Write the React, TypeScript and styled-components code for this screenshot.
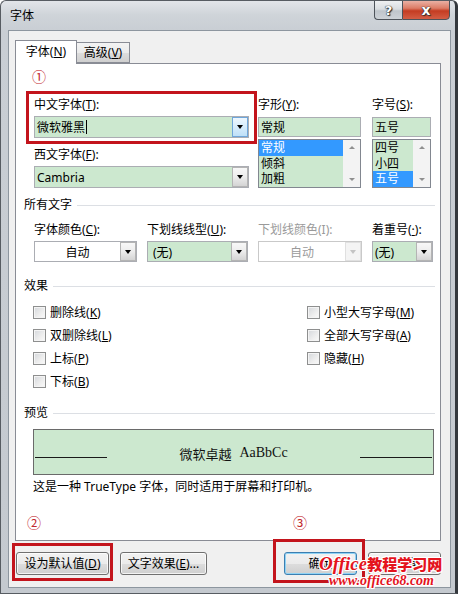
import React from "react";
import styled, { createGlobalStyle } from "styled-components";

const FONT = `"Noto Sans", "Noto Sans CJK SC", sans-serif`;

const Global = createGlobalStyle`
  html, body { margin: 0; padding: 0; background: #ffffff; }
  body { font-family: ${FONT}; font-size: 12px; color: #000; }
  * { box-sizing: border-box; }
`;

const Window = styled.div`
  position: relative;
  width: 458px;
  height: 594px;
  border: 1px solid #575c62;
  border-right: 3px solid #34383d;
  border-radius: 6px 6px 0 0;
  background: linear-gradient(180deg, #e2e5e9 0px, #cfd4d9 14px, #c9ced4 30px, #c4c9cf 100%);
  display: flex;
  flex-direction: column;
  overflow: hidden;
`;

const TitleBar = styled.div`
  height: 29px;
  display: flex;
  align-items: flex-start;
  padding: 0 5px 0 9px;
`;

const Title = styled.div`
  margin-top: 7px;
  line-height: 16px;
  font-size: 12px;
  color: #000;
`;

const Caption = styled.div`
  margin-left: auto;
  display: flex;
  margin-top: -1px;
`;

const CaptionBtn = styled.div`
  height: 20px;
  display: flex;
  align-items: center;
  justify-content: center;
  border: 1px solid #4d535a;
  color: #fff;
  font-weight: bold;
  font-family: "DejaVu Sans", sans-serif;
  text-shadow: 0 0 1px #222, 0 0 1px #222, 1px 1px 1px #333;
`;

const HelpBtn = styled(CaptionBtn)`
  width: 28px;
  border-right: none;
  border-radius: 0 0 0 4px;
  background: linear-gradient(180deg, #eef0f2 0%, #d9dde1 45%, #bfc5cb 55%, #cdd2d7 100%);
  font-size: 13px;
`;

const CloseBtn = styled(CaptionBtn)`
  width: 48px;
  border-radius: 0 0 4px 0;
  background: linear-gradient(180deg, #eab0a3 0%, #dc7c66 40%, #c43c22 55%, #d35d44 100%);
  font-size: 14px;
`;

const Client = styled.div`
  margin-left: 7px;
  width: 443px;
  height: 558px;
  border: 1px solid #8d969f;
  background: #f0f0f0;
  padding: 9px 0 0 6px;
  display: flex;
  flex-direction: column;
`;

const Tabs = styled.div`
  display: flex;
  align-items: flex-end;
  height: 23px;
  position: relative;
  z-index: 1;
`;

const Tab = styled.div<{ $active?: boolean }>`
  height: ${(p) => (p.$active ? 24 : 21)}px;
  width: ${(p) => (p.$active ? 62 : 53)}px;
  margin-bottom: ${(p) => (p.$active ? -1 : 0)}px;
  border: 1px solid #898c95;
  border-bottom: ${(p) => (p.$active ? "none" : "1px solid #898c95")};
  border-left: ${(p) => (p.$active ? "1px solid #898c95" : "none")};
  background: ${(p) => (p.$active ? "#ffffff" : "linear-gradient(180deg, #f3f3f3 0%, #ebebeb 50%, #dddddd 51%, #cfcfcf 100%)")};
  display: flex;
  align-items: center;
  justify-content: center;
  padding-bottom: ${(p) => (p.$active ? 2 : 0)}px;
  line-height: 16px;
`;

const U = styled.span`
  text-decoration: underline;
`;

const Panel = styled.div`
  width: 426px;
  height: 478px;
  border: 1px solid #898c95;
  background: #ffffff;
  padding: 33px 5px 0 8px;
  display: flex;
  flex-direction: column;
`;

const TopGrid = styled.div`
  margin-left: 10px;
  display: grid;
  grid-template-columns: 215px 103px 61px;
  column-gap: 9px;
  & > :nth-child(3) { margin-left: 2px; }
`;

const Column = styled.div`
  display: flex;
  flex-direction: column;
`;

const Label = styled.div<{ $mt?: number; $disabled?: boolean }>`
  height: 16px;
  line-height: 16px;
  margin-top: ${(p) => p.$mt ?? 0}px;
  color: ${(p) => (p.$disabled ? "#9a9a9a" : "#000")};
  white-space: nowrap;
`;

const Combo = styled.div<{ $h: number; $mt?: number; $green?: boolean; $disabled?: boolean }>`
  height: ${(p) => p.$h}px;
  margin-top: ${(p) => p.$mt ?? 0}px;
  border: 1px solid ${(p) => (p.$disabled ? "#c9c9c9" : "#abadb3")};
  background: ${(p) => (p.$green ? "#cce8cf" : "#ffffff")};
  display: flex;
  align-items: stretch;
`;

const ComboText = styled.div<{ $center?: boolean; $disabled?: boolean; $pad?: number }>`
  flex: 1;
  display: flex;
  align-items: center;
  justify-content: ${(p) => (p.$center ? "center" : "flex-start")};
  padding-left: ${(p) => (p.$center ? 0 : p.$pad ?? 2)}px;
  color: ${(p) => (p.$disabled ? "#9a9a9a" : "#000")};
  font-size: 12px;
  white-space: nowrap;
`;

const Caret = styled.span`
  display: inline-block;
  width: 1px;
  height: 14px;
  background: #000;
  margin-left: 1px;
`;

const DropBtn = styled.div<{ $hot?: boolean; $disabled?: boolean }>`
  width: 16px;
  border: 1px solid ${(p) => (p.$hot ? "#6fa6da" : p.$disabled ? "#e0e0e0" : "#b4b4b4")};
  background: ${(p) =>
    p.$hot
      ? "linear-gradient(180deg, #eef7fe 0%, #d6ecfc 50%, #bfe0f8 100%)"
      : p.$disabled
      ? "#f4f4f4"
      : "linear-gradient(180deg, #f8f8f8 0%, #ececec 50%, #d4d4d4 100%)"};
  display: flex;
  align-items: center;
  justify-content: center;
`;

const Arrow = styled.span<{ $disabled?: boolean }>`
  width: 0;
  height: 0;
  border-left: 3.5px solid transparent;
  border-right: 3.5px solid transparent;
  border-top: 4px solid ${(p) => (p.$disabled ? "#c4c4c4" : "#000")};
`;

const TextBox = styled.div`
  margin-top: 4px;
  height: 20px;
  border: 1px solid #abadb3;
  background: #cce8cf;
  padding-left: 2px;
  display: flex;
  align-items: center;
`;

const ListBox = styled.div`
  margin-top: 2px;
  height: 49px;
  border: 1px solid #828790;
  background: #cce8cf;
  display: flex;
  overflow: hidden;
`;

const Items = styled.div`
  flex: 1;
  display: flex;
  flex-direction: column;
`;

const Item = styled.div<{ $selected?: boolean }>`
  height: 15.7px;
  line-height: 15.7px;
  padding-left: 2px;
  font-size: 12px;
  background: ${(p) => (p.$selected ? "#3399ff" : "transparent")};
  color: ${(p) => (p.$selected ? "#ffffff" : "#000")};
`;

const ScrollBar = styled.div`
  width: 17px;
  background: #f3f3f3;
  display: flex;
  flex-direction: column;
  justify-content: space-between;
  align-items: center;
  padding: 6px 0 6px;
`;

const ScrollArrow = styled.span<{ $up?: boolean }>`
  width: 0;
  height: 0;
  border-left: 3px solid transparent;
  border-right: 3px solid transparent;
  border-top: ${(p) => (p.$up ? "none" : "3px solid #8f8f8f")};
  border-bottom: ${(p) => (p.$up ? "3px solid #8f8f8f" : "none")};
`;

const Heading = styled.div<{ $mt: number }>`
  margin-top: ${(p) => p.$mt}px;
  height: 16px;
  display: flex;
  align-items: center;
  line-height: 16px;
  &::after {
    content: "";
    flex: 1;
    height: 1px;
    background: #dcdfe4;
    margin-left: 5px;
  }
`;

const DropRow = styled.div`
  margin-top: 9px;
  margin-left: 10px;
  display: grid;
  grid-template-columns: 103px 101px 104px 61px;
  column-gap: 10px;
`;

const DropCell = styled.div`
  display: flex;
  flex-direction: column;
  & > ${Combo} { margin-top: 3px; }
`;

const CheckGrid = styled.div`
  margin-top: 7px;
  margin-left: 9px;
  display: grid;
  grid-template-columns: 274px auto;
  grid-template-rows: repeat(4, 23px);
  grid-auto-flow: column;
`;

const CheckItem = styled.label`
  display: flex;
  align-items: center;
  gap: 4px;
  line-height: 16px;
  white-space: nowrap;
`;

const CheckText = styled.span`
  white-space: nowrap;
`;

const Box = styled.span`
  width: 13px;
  height: 13px;
  border: 1px solid #8e8f8f;
  background: linear-gradient(135deg, #d4d7db 0%, #eeeeee 60%, #fafafa 100%);
  box-shadow: inset 0 0 0 1px #f4f4f4;
`;

const Preview = styled.div`
  margin-top: 8px;
  margin-left: 9px;
  width: 401px;
  height: 46px;
  border: 1px solid #6a6a6a;
  background: #cce8cf;
  display: flex;
  padding: 0 1px;
`;

const PreviewLine = styled.div`
  width: 72px;
  align-self: flex-end;
  margin-bottom: 16px;
  border-bottom: 1px solid #1a1a1a;
`;

const PreviewText = styled.div`
  flex: 1;
  display: flex;
  align-items: center;
  justify-content: center;
  font-size: 13px;
  padding-top: 2px;
  color: #111;
`;

const Serif = styled.span`
  font-family: "Liberation Serif", "DejaVu Serif", serif;
  font-size: 14px;
  margin-left: 8px;
`;

const Desc = styled.div`
  margin-top: 4px;
  margin-left: 9px;
  height: 16px;
  line-height: 16px;
`;

const ButtonRow = styled.div`
  margin-top: 11px;
  width: 426px;
  padding-left: 1px;
  display: flex;
  justify-content: space-between;
`;

const Group = styled.div`
  display: flex;
  gap: 11px;
`;

const Button = styled.div<{ $w: number; $primary?: boolean }>`
  width: ${(p) => p.$w}px;
  height: 23px;
  border: 1px solid ${(p) => (p.$primary ? "#3c7fb1" : "#707070")};
  border-radius: 3px;
  background: linear-gradient(180deg, #f2f2f2 0%, #ebebeb 50%, #dddddd 51%, #cfcfcf 100%);
  box-shadow: inset 0 0 0 1px ${(p) => (p.$primary ? "#8fd3f5" : "rgba(255,255,255,0.75)")};
  display: flex;
  align-items: center;
  justify-content: center;
  white-space: nowrap;
  line-height: 16px;
`;

/* ---------- annotation overlays ---------- */

const Mark = styled.div<{ $x: number; $y: number }>`
  position: absolute;
  left: ${(p) => p.$x}px;
  top: ${(p) => p.$y}px;
  color: #c1272d;
  font-family: "Noto Sans CJK SC", sans-serif;
  font-size: 14px;
  line-height: 14px;
`;

const RedBox = styled.div<{ $x: number; $y: number; $w: number; $h: number }>`
  position: absolute;
  left: ${(p) => p.$x}px;
  top: ${(p) => p.$y}px;
  width: ${(p) => p.$w}px;
  height: ${(p) => p.$h}px;
  border: 3px solid #c3141c;
  pointer-events: none;
`;

const Watermark = styled.div`
  position: absolute;
  left: 318px;
  top: 553px;
  color: #e4141d;
  line-height: 1;
  pointer-events: none;
  text-shadow: 1px 0 0 #fff, -1px 0 0 #fff, 0 1px 0 #fff, 0 -1px 0 #fff, 1px 1px 0 #fff, -1px -1px 0 #fff, 1px -1px 0 #fff, -1px 1px 0 #fff;
`;

const WmTop = styled.div`
  display: flex;
  align-items: baseline;
  white-space: nowrap;
`;

const WmOffice = styled.span`
  font-family: "Liberation Serif", serif;
  font-style: italic;
  font-weight: bold;
  font-size: 19px;
`;

const WmCn = styled.span`
  font-family: "Noto Sans CJK SC", sans-serif;
  font-weight: 900;
  font-size: 15px;
`;

const WmUrl = styled.div`
  margin-left: 10px;
  margin-top: 1px;
  font-family: "Liberation Serif", serif;
  font-style: italic;
  font-weight: bold;
  font-size: 14px;
  white-space: nowrap;
`;

const checks: [string, string][] = [
  ["删除线", "K"],
  ["双删除线", "L"],
  ["上标", "P"],
  ["下标", "B"],
  ["小型大写字母", "M"],
  ["全部大写字母", "A"],
  ["隐藏", "H"],
];

export default function App() {
  return (
    <>
      <Global />
      <Window>
        <TitleBar>
          <Title>字体</Title>
          <Caption>
            <HelpBtn>?</HelpBtn>
            <CloseBtn>x</CloseBtn>
          </Caption>
        </TitleBar>
        <Client>
          <Tabs>
            <Tab $active>
              <span>
                字体(<U>N</U>)
              </span>
            </Tab>
            <Tab>
              <span>
                高级(<U>V</U>)
              </span>
            </Tab>
          </Tabs>
          <Panel>
            <TopGrid>
              <Column>
                <Label>
                  中文字体(<U>T</U>):
                </Label>
                <Combo $h={22} $mt={3} $green>
                  <ComboText>
                    微软雅黑
                    <Caret />
                  </ComboText>
                  <DropBtn $hot>
                    <Arrow />
                  </DropBtn>
                </Combo>
                <Label $mt={9}>
                  西文字体(<U>F</U>):
                </Label>
                <Combo $h={22} $mt={3} $green>
                  <ComboText>Cambria</ComboText>
                  <DropBtn>
                    <Arrow />
                  </DropBtn>
                </Combo>
              </Column>
              <Column>
                <Label>
                  字形(<U>Y</U>):
                </Label>
                <TextBox>常规</TextBox>
                <ListBox>
                  <Items>
                    <Item $selected>常规</Item>
                    <Item>倾斜</Item>
                    <Item>加粗</Item>
                  </Items>
                  <ScrollBar>
                    <ScrollArrow $up />
                    <ScrollArrow />
                  </ScrollBar>
                </ListBox>
              </Column>
              <Column>
                <Label>
                  字号(<U>S</U>):
                </Label>
                <TextBox>五号</TextBox>
                <ListBox>
                  <Items>
                    <Item>四号</Item>
                    <Item>小四</Item>
                    <Item $selected>五号</Item>
                  </Items>
                  <ScrollBar>
                    <ScrollArrow $up />
                    <ScrollArrow />
                  </ScrollBar>
                </ListBox>
              </Column>
            </TopGrid>

            <Heading $mt={9}>所有文字</Heading>
            <DropRow>
              <DropCell>
                <Label>
                  字体颜色(<U>C</U>):
                </Label>
                <Combo $h={21}>
                  <ComboText $center>自动</ComboText>
                  <DropBtn>
                    <Arrow />
                  </DropBtn>
                </Combo>
              </DropCell>
              <DropCell>
                <Label>
                  下划线线型(<U>U</U>):
                </Label>
                <Combo $h={21} $green>
                  <ComboText $pad={5}>(无)</ComboText>
                  <DropBtn>
                    <Arrow />
                  </DropBtn>
                </Combo>
              </DropCell>
              <DropCell>
                <Label $disabled>下划线颜色(I):</Label>
                <Combo $h={21} $disabled>
                  <ComboText $center $disabled>
                    自动
                  </ComboText>
                  <DropBtn $disabled>
                    <Arrow $disabled />
                  </DropBtn>
                </Combo>
              </DropCell>
              <DropCell>
                <Label>
                  着重号(<U>·</U>):
                </Label>
                <Combo $h={21} $green>
                  <ComboText>(无)</ComboText>
                  <DropBtn>
                    <Arrow />
                  </DropBtn>
                </Combo>
              </DropCell>
            </DropRow>

            <Heading $mt={16}>效果</Heading>
            <CheckGrid>
              {checks.map(([name, key]) => (
                <CheckItem key={key}>
                  <Box />
                  <CheckText>
                    {name}(<U>{key}</U>)
                  </CheckText>
                </CheckItem>
              ))}
            </CheckGrid>

            <Heading $mt={12}>预览</Heading>
            <Preview>
              <PreviewLine />
              <PreviewText>
                微软卓越<Serif>AaBbCc</Serif>
              </PreviewText>
              <PreviewLine />
            </Preview>
            <Desc>这是一种 TrueType 字体，同时适用于屏幕和打印机。</Desc>
          </Panel>

          <ButtonRow>
            <Group>
              <Button $w={93}>
                <span>
                  设为默认值(<U>D</U>)
                </span>
              </Button>
              <Button $w={87}>
                <span>
                  文字效果(<U>E</U>)...
                </span>
              </Button>
            </Group>
            <Group>
              <Button $w={73} $primary>
                确定
              </Button>
              <Button $w={73}>取消</Button>
            </Group>
          </ButtonRow>
        </Client>

        <Mark $x={31} $y={68}>①</Mark>
        <Mark $x={26} $y={514}>②</Mark>
        <Mark $x={292} $y={514}>③</Mark>
        <RedBox $x={25} $y={90} $w={231} $h={53} />
        <RedBox $x={11} $y={542} $w={101} $h={38} />
        <RedBox $x={272} $y={538} $w={92} $h={44} />

        <Watermark>
          <WmTop>
            <WmOffice>Office</WmOffice>
            <WmCn>教程学习网</WmCn>
          </WmTop>
          <WmUrl>www.office68.com</WmUrl>
        </Watermark>
      </Window>
    </>
  );
}
